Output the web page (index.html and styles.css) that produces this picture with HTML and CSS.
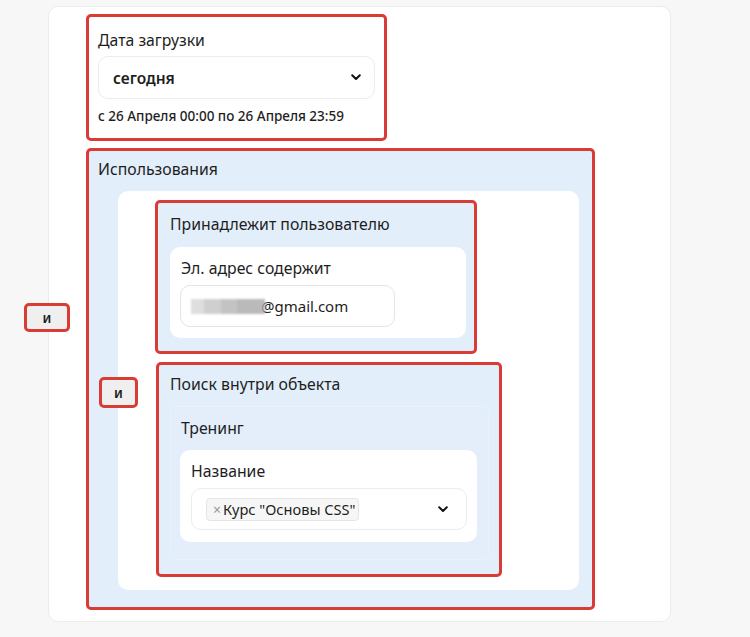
FILE: index.html
```html
<!DOCTYPE html>
<html lang="ru">
<head>
    <meta charset="UTF-8">
    <meta name="viewport" content="width=device-width, initial-scale=1.0">
    <title>Фильтр</title>
    <link rel="stylesheet" href="styles.css">
</head>
<body>
    <div class="page">
        <div class="card">
            <!-- outer "and" connector -->
            <div class="and and-outer">и</div>

            <!-- Date filter -->
            <div class="hl date-box">
                <div class="label">Дата загрузки</div>
                <div class="select">
                    <span class="select-value">сегодня</span>
                    <svg class="chevron" width="10" height="7" viewBox="0 0 10 7"><polyline points="1.2,1.2 5,5 8.8,1.2" fill="none" stroke="#111" stroke-width="2" stroke-linecap="round" stroke-linejoin="round"/></svg>
                </div>
                <div class="hint">с 26 Апреля 00:00 по 26 Апреля 23:59</div>
            </div>

            <!-- Usage group -->
            <div class="hl group usage">
                <div class="label">Использования</div>
                <div class="group-body">
                    <div class="and and-inner">и</div>

                    <div class="hl group owner">
                        <div class="label">Принадлежит пользователю</div>
                        <div class="field owner-field">
                            <div class="label">Эл. адрес содержит</div>
                            <div class="input">
                                <span class="blur"></span><span class="email">@gmail.com</span>
                            </div>
                        </div>
                    </div>

                    <div class="hl group search">
                        <div class="label">Поиск внутри объекта</div>
                        <div class="sub">
                            <div class="label">Тренинг</div>
                            <div class="field name-field">
                                <div class="label">Название</div>
                                <div class="select multi">
                                    <span class="chip"><span class="chip-x">&times;</span>Курс "Основы CSS"</span>
                                    <svg class="chevron" width="10" height="7" viewBox="0 0 10 7"><polyline points="1.2,1.2 5,5 8.8,1.2" fill="none" stroke="#111" stroke-width="2" stroke-linecap="round" stroke-linejoin="round"/></svg>
                                </div>
                            </div>
                        </div>
                    </div>
                </div>
            </div>
        </div>
    </div>
</body>
</html>
```

FILE: styles.css
```css
* {
    margin: 0;
    padding: 0;
    box-sizing: border-box;
}

body {
    font-family: "Noto Sans", "Open Sans", sans-serif;
    color: #1e1e1e;
    background-color: #f7f7f7;
    font-size: 15px;
}

.page {
    padding: 6px 79px 15px 48px;
}

.card {
    position: relative;
    background-color: #fff;
    border: 1px solid #ececec;
    border-radius: 10px;
    height: 616px;
    padding: 7px 0 0 37px;
}

.label {
    font-size: 15.8px;
    line-height: 22px;
    height: 22px;
}

/* red highlight frames */
.hl {
    border: 3px solid #d83c34;
    border-radius: 5px;
}

.date-box {
    width: 301px;
    height: 127px;
    padding: 12px 9px 0 9px;
}

.select {
    display: flex;
    align-items: center;
    justify-content: space-between;
    height: 43px;
    margin-top: 5px;
    border: 1px solid #ececec;
    border-radius: 10px;
    background-color: #fff;
    padding: 0 13px 0 14px;
}

.select-value {
    font-weight: 600;
    font-size: 15.5px;
}

.chevron {
    display: block;
}

.hint {
    margin-top: 8px;
    font-size: 13.5px;
    font-weight: 500;
    line-height: 18px;
}

.group {
    background-color: #e3eefb;
}

.usage {
    width: 509px;
    height: 462px;
    margin-top: 7px;
    padding: 7px 13px 0 9px;
}

.group-body {
    position: relative;
    margin: 11px 0 0 20px;
    height: 399px;
    background-color: #fff;
    border-radius: 10px;
    padding: 9px 0 0 37px;
}

.owner {
    width: 322px;
    height: 154px;
    padding: 10px 8px 0 12px;
}

.field {
    background-color: #fff;
    border-radius: 10px;
    padding: 10px 10px 0 11px;
}

.owner-field {
    margin-top: 12px;
    height: 91px;
}

.input {
    display: flex;
    align-items: center;
    width: 215px;
    height: 42px;
    margin: 6px 0 0 -1px;
    border: 1px solid #e4e4e4;
    border-radius: 10px;
    padding-left: 10px;
    font-size: 15px;
}

.blur {
    display: inline-block;
    width: 74px;
    height: 15px;
    background: linear-gradient(90deg, #d6d6d6 0 18%, #c4c4c4 18% 40%, #b5b5b5 40% 62%, #a9a9a9 62% 100%);
    filter: blur(1.2px);
    opacity: 0.8;
}

.email {
    margin-left: -4px;
}

.search {
    width: 346px;
    height: 215px;
    margin: 8px 0 0 1px;
    padding: 8px 10px 0 11px;
}

.sub {
    margin-top: 11px;
    height: 154px;
    border: 1px solid #e8f1fc;
    border-radius: 6px;
    background-color: #e4eefb;
    padding: 10px 11px 0 9px;
}

.sub > .label {
    padding-left: 1px;
}

.name-field {
    margin-top: 11px;
    height: 92px;
}

.multi {
    width: 276px;
    height: 42px;
    margin-top: 6px;
    padding-right: 18px;
}

.chip {
    display: inline-flex;
    align-items: center;
    height: 23px;
    border: 1px solid #e5e5e5;
    background-color: #f6f6f6;
    border-radius: 4px;
    padding: 0 3px 0 6px;
    font-size: 14.6px;
}

.chip-x {
    color: #999;
    font-size: 14px;
    margin-right: 2px;
}

/* "and" connectors sitting on the left edge of a group */
.and {
    position: absolute;
    display: flex;
    align-items: center;
    justify-content: center;
    border: 3px solid #d83c34;
    border-radius: 5px;
    background-color: #efefef;
    font-size: 13.5px;
    font-weight: 600;
}

.and-outer {
    left: -25px;
    top: 296px;
    width: 46px;
    height: 29px;
}

.and-inner {
    left: -19px;
    top: 186px;
    width: 39px;
    height: 31px;
}
```
